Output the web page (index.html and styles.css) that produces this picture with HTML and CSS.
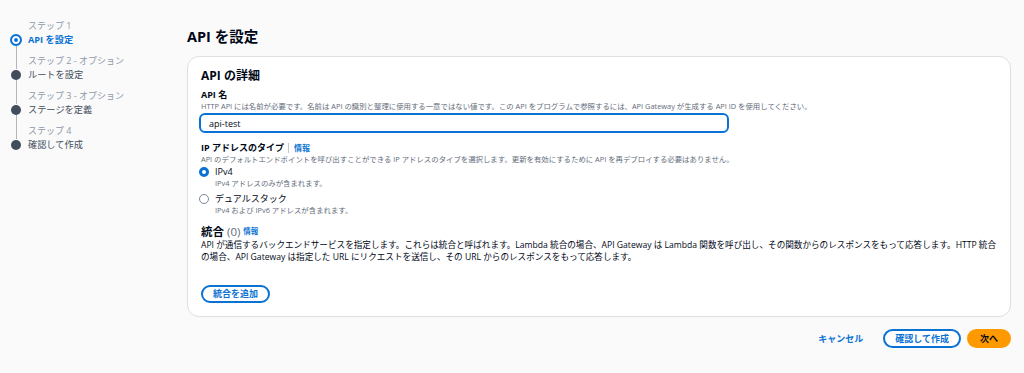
FILE: index.html
```html
<!DOCTYPE html>
<html lang="ja">
<head>
    <meta charset="UTF-8">
    <meta name="viewport" content="width=device-width, initial-scale=1.0">
    <title>API を設定</title>
    <link rel="stylesheet" href="styles.css">
</head>
<body>
    <aside class="steps">
        <div class="step active">
            <span class="step-num">ステップ 1</span>
            <span class="step-name">API を設定</span>
        </div>
        <div class="step">
            <span class="step-num">ステップ 2 - オプション</span>
            <span class="step-name">ルートを設定</span>
        </div>
        <div class="step">
            <span class="step-num">ステップ 3 - オプション</span>
            <span class="step-name">ステージを定義</span>
        </div>
        <div class="step last">
            <span class="step-num">ステップ 4</span>
            <span class="step-name">確認して作成</span>
        </div>
    </aside>

    <main class="content">
        <h1 class="title">API を設定</h1>

        <section class="card">
            <h2>API の詳細</h2>

            <div class="field name-field">
                <label class="field-label" for="apiname">API 名</label>
                <p class="hint">HTTP API には名前が必要です。名前は API の識別と整理に使用する一意ではない値です。この API をプログラムで参照するには、API Gateway が生成する API ID を使用してください。</p>
                <input type="text" id="apiname" class="text-input" value="api-test">
            </div>

            <div class="field">
                <span class="field-label">IP アドレスのタイプ <span class="sep"></span><a class="info">情報</a></span>
                <p class="hint">API のデフォルトエンドポイントを呼び出すことができる IP アドレスのタイプを選択します。更新を有効にするために API を再デプロイする必要はありません。</p>
                <label class="radio">
                    <input type="radio" name="ip" checked>
                    <span class="radio-text">
                        <span class="radio-name">IPv4</span>
                        <span class="radio-desc">IPv4 アドレスのみが含まれます。</span>
                    </span>
                </label>
                <label class="radio">
                    <input type="radio" name="ip">
                    <span class="radio-text">
                        <span class="radio-name">デュアルスタック</span>
                        <span class="radio-desc">IPv4 および IPv6 アドレスが含まれます。</span>
                    </span>
                </label>
            </div>

            <div class="integrations">
                <h3>統合 <span class="count">(0)</span> <a class="info">情報</a></h3>
                <p class="desc">API が通信するバックエンドサービスを指定します。これらは統合と呼ばれます。Lambda 統合の場合、API Gateway は Lambda 関数を呼び出し、その関数からのレスポンスをもって応答します。HTTP 統合の場合、API Gateway は指定した URL にリクエストを送信し、その URL からのレスポンスをもって応答します。</p>
                <button type="button" class="btn">統合を追加</button>
            </div>
        </section>

        <footer class="actions">
            <button type="button" class="btn-link">キャンセル</button>
            <button type="button" class="btn">確認して作成</button>
            <button type="button" class="btn primary">次へ</button>
        </footer>
    </main>
</body>
</html>
```

FILE: styles.css
```css
* {
    box-sizing: border-box;
    margin: 0;
    padding: 0;
}

body {
    width: 1024px;
    min-height: 373px;
    display: flex;
    font-family: 'Open Sans', 'Noto Sans CJK JP', sans-serif;
    color: #000716;
    background-color: #fafafa;
}

/* ステップ */
.steps {
    width: 187px;
    padding: 20px 0 0 10px;
    flex-shrink: 0;
}

.step {
    position: relative;
    display: flex;
    flex-direction: column;
    padding-left: 18px;
    height: 35px;
}

.step::before {
    position: absolute;
    content: "";
    left: 6px;
    top: 21px;
    bottom: -14px;
    width: 1px;
    background-color: #b4b4bb;
}

.step.last::before {
    display: none;
}

.step::after {
    position: absolute;
    content: "";
    left: 1px;
    top: 15px;
    width: 10px;
    height: 10px;
    border-radius: 50%;
    background-color: #414d5c;
}

.step.active::after {
    left: 0;
    top: 14px;
    width: 8px;
    height: 8px;
    border: 2px solid #0972d3;
    background-color: #0972d3;
    box-shadow: inset 0 0 0 2px #fff;
}

.step-num {
    font-size: 9px;
    line-height: 12px;
    color: #8d99a8;
}

.step-name {
    font-size: 9.2px;
    line-height: 15px;
    color: #414d5c;
}

.step.active .step-name {
    color: #0972d3;
    font-weight: 700;
}

/* メイン */
.content {
    flex: 1;
    padding: 26px 13px 0 0;
}

.title {
    font-size: 14.5px;
    line-height: 22px;
    font-weight: 700;
    margin-bottom: 8px;
}

.card {
    background-color: #fff;
    border: 1px solid #dedee3;
    border-radius: 12px;
    padding: 10px 13px 13px 13px;
}

.card h2 {
    font-size: 12px;
    line-height: 18px;
    font-weight: 700;
    margin-bottom: 4px;
}

.field {
    margin-bottom: 8px;
}

.field-label {
    display: flex;
    align-items: center;
    font-size: 9px;
    line-height: 12px;
    font-weight: 700;
}

.sep {
    display: inline-block;
    width: 1px;
    height: 10px;
    margin: 0 5px 0 4px;
    background-color: #c6c6cd;
}

.info {
    color: #0972d3;
    font-size: 8px;
    font-weight: 700;
}

.hint {
    font-size: 7.4px;
    line-height: 11px;
    color: #5f6b7a;
    margin-bottom: 3px;
}

.name-field {
    margin-bottom: 9px;
}

.name-field .hint {
    margin-bottom: 1px;
}

.text-input {
    display: block;
    width: 530px;
    height: 20px;
    margin-left: -2px;
    border: 2px solid #0972d3;
    border-radius: 6px;
    padding: 0 8px;
    font-family: inherit;
    font-size: 9px;
    color: #000716;
    outline: none;
}

.field .hint + .radio {
    margin-top: -2px;
}

.radio {
    display: flex;
    align-items: flex-start;
    margin-top: 4px;
}

.radio input {
    appearance: none;
    flex-shrink: 0;
    width: 10px;
    height: 10px;
    margin: 1px 6px 0 -2px;
    border: 1px solid #7d8998;
    border-radius: 50%;
    background-color: #fff;
}

.radio input:checked {
    border: 3px solid #0972d3;
}

.radio-text {
    display: flex;
    flex-direction: column;
}

.radio-name {
    font-size: 9px;
    line-height: 12px;
}

.radio-desc {
    font-size: 7.4px;
    line-height: 11px;
    color: #5f6b7a;
}

.integrations h3 {
    font-size: 11.5px;
    line-height: 14px;
    font-weight: 700;
}

.count {
    font-weight: 400;
    color: #5f6b7a;
}

.integrations .info {
    font-size: 7.5px;
    vertical-align: 2px;
}

.desc {
    font-size: 8.6px;
    line-height: 12px;
    color: #000716;
    margin-bottom: 17px;
}

.btn {
    font-family: inherit;
    font-size: 9px;
    font-weight: 700;
    line-height: 12px;
    color: #0972d3;
    background-color: #fff;
    border: 2px solid #0972d3;
    border-radius: 12px;
    padding: 1px 10px;
}

.actions .btn {
    line-height: 13px;
    padding: 1px 10px;
}

.actions .btn.primary {
    color: #000716;
    background-color: #ff9900;
    border-color: #ff9900;
    padding: 1px 11px;
}

.actions {
    display: flex;
    justify-content: flex-end;
    align-items: center;
    gap: 6px;
    margin-top: 12px;
}

.btn-link {
    font-family: inherit;
    font-size: 9px;
    font-weight: 700;
    color: #0972d3;
    background: none;
    border: none;
    margin-right: 14px;
}
```
